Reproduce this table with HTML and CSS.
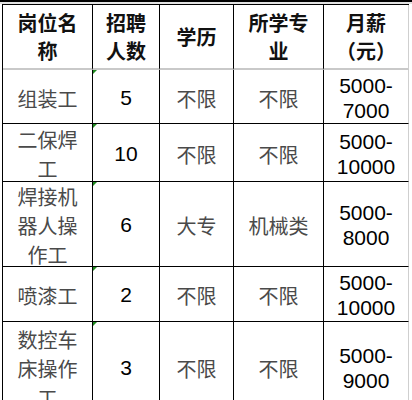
FILE: index.html
```html
<!DOCTYPE html>
<html lang="zh">
<head>
<meta charset="utf-8">
<link rel="stylesheet" href="styles.css">
</head>
<body>
<div class="topbar"></div>
<div class="table">
  <div class="cell head c1">岗位名称</div>
  <div class="cell head c2">招聘人数</div>
  <div class="cell head c3">学历</div>
  <div class="cell head c4">所学专业</div>
  <div class="cell head c5">月薪（元）</div>

  <div class="cell cj c1">组装工</div>
  <div class="cell num c2 mark">5</div>
  <div class="cell cj c3">不限</div>
  <div class="cell cj c4">不限</div>
  <div class="cell num sal c5">5000-7000</div>

  <div class="cell cj c1">二保焊工</div>
  <div class="cell num c2 mark">10</div>
  <div class="cell cj c3">不限</div>
  <div class="cell cj c4">不限</div>
  <div class="cell num sal c5">5000-10000</div>

  <div class="cell cj c1">焊接机器人操作工</div>
  <div class="cell num c2 mark">6</div>
  <div class="cell cj c3">大专</div>
  <div class="cell cj c4">机械类</div>
  <div class="cell num sal c5">5000-8000</div>

  <div class="cell cj c1">喷漆工</div>
  <div class="cell num c2 mark">2</div>
  <div class="cell cj c3">不限</div>
  <div class="cell cj c4">不限</div>
  <div class="cell num sal c5">5000-10000</div>

  <div class="cell cj c1">数控车床操作工</div>
  <div class="cell num c2 mark">3</div>
  <div class="cell cj c3">不限</div>
  <div class="cell cj c4">不限</div>
  <div class="cell num sal c5">5000-9000</div>
</div>
</body>
</html>
```
FILE: styles.css
```css
html, body {
  margin: 0;
  padding: 0;
  background: #fff;
}
body {
  width: 412px;
  height: 400px;
  overflow: hidden;
  font-family: "Noto Sans CJK SC", "Liberation Sans", sans-serif;
}
.topbar {
  height: 2px;
  background: #000;
  border-bottom: 2px solid #e2e2e2;
}
.table {
  display: grid;
  grid-template-columns: 90px 67px 74px 90px 85px;
  grid-template-rows: 65px 54px 58px 85px 55px 90px;
  margin-left: 2px;
  width: max-content;
  border-left: 1px solid #000;
  border-top: 1px solid #000;
}
.cell {
  box-sizing: border-box;
  border-right: 1px solid #000;
  border-bottom: 1px solid #000;
  display: flex;
  align-items: center;
  justify-content: center;
  text-align: center;
  font-size: 20px;
  position: relative;
}
.c5 {
  border-right-color: #cfcfcf;
}
.head {
  font-weight: bold;
  color: #111;
  line-height: 28px;
  border-bottom: 2px solid #c9c9c9;
  padding-top: 1px;
}
.c1, .c4 {
  padding: 0 12px;
}
.head.c2 {
  padding: 0 6px;
}
.head.c5 {
  padding: 0 10px;
}
.cj {
  color: #4a4a4a;
  line-height: 29px;
  padding-top: 3px;
}
.num {
  font-family: "Liberation Sans", Arial, sans-serif;
  color: #000;
  font-size: 21px;
  padding-top: 2px;
}
.sal {
  line-height: 25px;
  padding-left: 8px;
  padding-right: 8px;
}
.mark::before {
  content: "";
  position: absolute;
  top: 0;
  left: 0;
  border-top: 4px solid #1e8a1e;
  border-right: 4px solid transparent;
}
```
